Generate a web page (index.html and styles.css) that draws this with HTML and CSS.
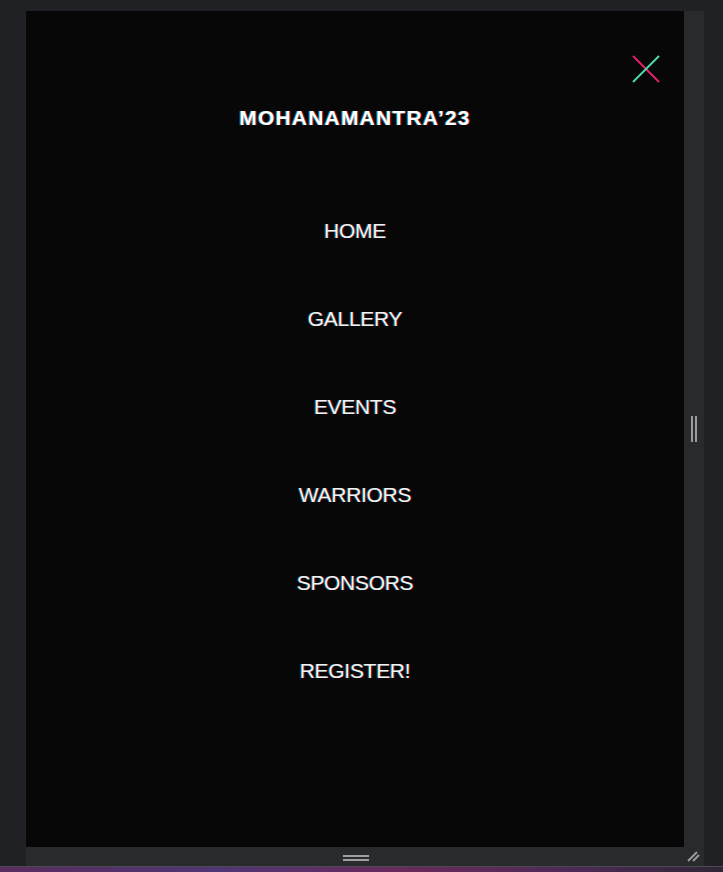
FILE: index.html
```html
<!DOCTYPE html>
<html lang="en">
<head>
<meta charset="utf-8">
<title>MOHANAMANTRA'23</title>
<link rel="stylesheet" href="styles.css">
</head>
<body>
<div class="stage">
  <div class="frame">
    <div class="row">
      <div class="panel">
        <button class="close" aria-label="Close menu">
          <svg width="30" height="30" viewBox="0 0 30 30">
            <line x1="1" y1="1" x2="27" y2="27" stroke="#e2206f" stroke-width="2"/>
            <line x1="1" y1="27" x2="27" y2="1" stroke="#4fd8ad" stroke-width="2"/>
          </svg>
        </button>
        <h1 class="title">MOHANAMANTRA’23</h1>
        <nav class="menu">
          <a class="item" href="#">HOME</a>
          <a class="item" href="#">GALLERY</a>
          <a class="item" href="#">EVENTS</a>
          <a class="item" href="#">WARRIORS</a>
          <a class="item" href="#">SPONSORS</a>
          <a class="item" href="#">REGISTER!</a>
        </nav>
      </div>
      <div class="vhandle"><span class="vbar"></span><span class="vbar"></span></div>
    </div>
    <div class="hbar">
      <div class="hcenter"><div class="hgrip"><span class="hline"></span><span class="hline"></span></div></div>
      <div class="corner">
        <svg width="14" height="14" viewBox="0 0 14 14">
          <line x1="1" y1="12" x2="10" y2="3" stroke="#9a9a9a" stroke-width="2"/>
          <line x1="6" y1="12" x2="12" y2="6" stroke="#9a9a9a" stroke-width="2"/>
        </svg>
      </div>
    </div>
  </div>
</div>
<div class="edge"></div>
</body>
</html>
```
FILE: styles.css
```css
html, body {
  margin: 0;
  padding: 0;
}
body {
  background: #202124;
  width: 723px;
  height: 872px;
  overflow: hidden;
  font-family: "Liberation Sans", Arial, sans-serif;
}
.stage {
  height: 866px;
  padding: 11px 0 0 26px;
  box-sizing: border-box;
}
.frame {
  width: 678px;
  height: 855px;
  background: #292a2e;
  display: flex;
  flex-direction: column;
}
.row {
  display: flex;
  height: 836px;
}
.panel {
  position: relative;
  width: 658px;
  height: 836px;
  background: #070707;
  display: flex;
  flex-direction: column;
  align-items: center;
  padding-top: 95px;
  box-sizing: border-box;
}
.close {
  position: absolute;
  left: 606px;
  top: 44px;
  width: 30px;
  height: 30px;
  padding: 0;
  border: 0;
  background: transparent;
}
.close svg { display: block; }
.title {
  margin: 0;
  font-size: 21px;
  line-height: 24px;
  font-weight: 700;
  letter-spacing: 1.2px;
  color: #ffffff;
  text-shadow: -1px 0 rgba(0, 230, 255, 0.55), 1px 0 rgba(255, 30, 60, 0.55);
}
.menu {
  display: flex;
  flex-direction: column;
  align-items: center;
  gap: 64px;
  margin-top: 89px;
}
.item {
  font-size: 21px;
  line-height: 24px;
  letter-spacing: -0.3px;
  color: #f2f2f2;
  text-decoration: none;
  text-shadow: -1px 0 rgba(0, 230, 255, 0.4), 1px 0 rgba(255, 30, 60, 0.4);
}
.vhandle {
  width: 20px;
  display: flex;
  align-items: center;
  padding-left: 7px;
  gap: 2px;
  box-sizing: border-box;
}
.vbar {
  width: 2px;
  height: 26px;
  background: #9c9c9c;
}
.hbar {
  display: flex;
  height: 19px;
}
.hcenter {
  width: 658px;
  display: flex;
  justify-content: center;
  align-items: center;
  padding-top: 3px;
  box-sizing: border-box;
}
.hgrip {
  display: flex;
  flex-direction: column;
  gap: 2px;
  margin-left: 2px;
}
.hline {
  width: 26px;
  height: 2px;
  background: #a0a0a0;
}
.corner {
  width: 20px;
  display: flex;
  align-items: flex-end;
  padding: 0 0 3px 3px;
  box-sizing: border-box;
}
.corner svg { display: block; }
.edge {
  height: 6px;
  border-top: 1px solid #4a4a4f;
  box-sizing: border-box;
  background: linear-gradient(90deg, #5a2c5e 0%, #4f3674 30%, #6a2a5c 55%, #4c2a55 80%, #2f2636 100%);
}
```
